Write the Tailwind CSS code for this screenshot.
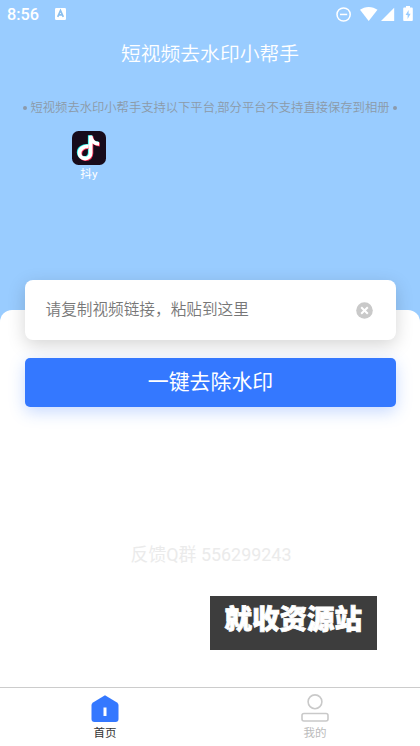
<!DOCTYPE html>
<html lang="zh-CN">
<head>
<meta charset="utf-8">
<meta name="viewport" content="width=device-width, initial-scale=1">
<title>短视频去水印小帮手</title>
<script src="https://cdn.jsdelivr.net/npm/@tailwindcss/browser@4"></script>
</head>
<body class="bg-white">
<div class="relative flex h-[746px] w-[420px] flex-col overflow-hidden bg-[#99ccff] font-['Roboto','Noto_Sans_CJK_SC',sans-serif]">
  <header class="flex h-7 shrink-0 items-center justify-between pl-[7px] pr-[6px] text-white">
    <div class="flex items-center gap-[15px]">
      <span class="w-[33px] pt-[2px] whitespace-nowrap text-[16.3px] leading-7 font-medium">8:56</span>
      <svg class="h-3 w-[11px]" viewBox="0 0 11 12"><rect width="11" height="12" rx="1.2" fill="#fff"/><path d="M2.700 8.800 5.500 2.500 8.300 8.800M3.800 6.900h3.400" fill="none" stroke="#8abfee" stroke-width="1.700"/></svg>
    </div>
    <svg class="h-7 w-[80px]" viewBox="334 0 80 28" fill="#fff"><circle cx="343.6" cy="14.5" r="6.6" fill="none" stroke="#fff" stroke-width="1.5"/><path d="M340 13.700h7.200v1.500H340z"/><path d="M368.700 21.100 360 9.800C362.400 8 365.400 6.900 368.700 6.900S375 8 377.500 9.800z"/><path d="M394.200 7.700V21H381z"/><path fill-rule="evenodd" d="M406 6h4v1.600h1.600c.7 0 1.200.5 1.200 1.200v11.100c0 .7-.5 1.200-1.200 1.200h-7.200c-.7 0-1.200-.5-1.200-1.200V8.800c0-.7.5-1.200 1.200-1.200h1.600zM408.600 10l-3 5h2v4l3-5.200h-2z"/></svg>
  </header>
  <h1 class="h-[50px] shrink-0 pt-[2px] text-center text-[19.8px] leading-[50px] font-[350] text-white">短视频去水印小帮手</h1>
  <div class="mt-[18px] flex h-[22px] shrink-0 items-center justify-center gap-[4px] text-[12.3px] leading-[22px] font-[350] whitespace-nowrap text-[#8c9aa8]">
    <span class="mt-[2px] size-[4px] rounded-full bg-[#8c9aab]"></span>
    <span class="pt-[1px]">短视频去水印小帮手支持以下平台,部分平台不支持直接保存到相册</span>
    <span class="mt-[2px] size-[4px] rounded-full bg-[#8c9aab]"></span>
  </div>
  <div class="mt-[12.500px] ml-[72px] flex w-[34px] shrink-0 flex-col items-center">
    <svg class="size-[34px]" viewBox="0 0 34 34"><rect width="34" height="34" rx="6.500" fill="#170b1b"/>
      <g fill="none" stroke-width="3.800"><path d="M16.500 15.500c-5-.4-9 2.500-9 6.500 0 3.300 2.400 5.500 5.500 5.500 3.300 0 5.600-2.300 5.600-5.600V4.700c.3 5 3.800 8 8.500 8.200" stroke="#25f4ee" transform="translate(-.8 -.5)"/><path d="M16.500 15.500c-5-.4-9 2.500-9 6.500 0 3.300 2.400 5.500 5.500 5.500 3.300 0 5.600-2.300 5.600-5.600V4.700c.3 5 3.800 8 8.500 8.200" stroke="#fe2c55" transform="translate(.8 .7)"/><path d="M16.500 15.500c-5-.4-9 2.500-9 6.500 0 3.300 2.400 5.500 5.500 5.500 3.300 0 5.600-2.300 5.600-5.600V4.700c.3 5 3.800 8 8.500 8.200" stroke="#fff"/></g>
    </svg>
    <span class="mt-[1px] text-[11.800px] leading-[17px] text-white">抖y</span>
  </div>
  <main class="mt-auto flex h-[377px] shrink-0 flex-col rounded-t-[12px] bg-white px-[24.500px]">
    <div class="-mt-[30px] flex h-[60px] shrink-0 items-center justify-between rounded-[8px] bg-white pr-[23px] pl-[21px] shadow-[0_5px_18px_rgba(0,0,0,0.17)]">
      <span class="text-[15.650px] font-[350] text-[#777]">请复制视频链接，粘贴到这里</span>
      <svg class="size-[17px]" viewBox="0 0 17 17"><circle cx="8.500" cy="8.500" r="8.300" fill="#c9c9c9"/><path d="m5.200 5.200 6.600 6.600m0-6.600-6.600 6.600" stroke="#fff" stroke-width="2"/></svg>
    </div>
    <button class="mt-[18px] h-[49px] shrink-0 rounded-[5px] bg-[#3478ff] pl-[1px] text-[20.900px] leading-[49px] text-white shadow-[0_5px_16px_rgba(52,120,255,0.27)]">一键去除水印</button>
    <p class="mt-[134px] pl-[2px] text-center text-[17.900px] leading-7 whitespace-nowrap text-[#ebebeb]">反馈Q群 556299243</p>
    <div class="mt-[27px] mr-[-5px] ml-[185px] flex h-[54px] w-[167.500px] shrink-0 justify-center bg-[#3d3d3d] pt-[5px]">
      <span class="text-[27.500px] leading-[38px] font-black whitespace-nowrap text-white [-webkit-text-stroke:0.8px_white]">就收资源站</span>
    </div>
  </main>
  <nav class="flex h-[59px] shrink-0 border-t border-[#ccc] bg-white">
    <div class="flex flex-1 flex-col items-center pt-[6px]">
      <svg class="h-[29px] w-[28px]" viewBox="0 0 28 29"><path d="M14 1.200 26 8.500Q27.500 9.500 27.500 11V25q0 3-3 3h-21q-3 0-3-3V11Q.5 9.500 2 8.500z" fill="#3478ff"/><rect x="12.500" y="13.500" width="3" height="8.500" fill="#fff"/></svg>
      <span class="mt-[1px] text-[11.500px] leading-[19px] text-[#333]">首页</span>
    </div>
    <div class="flex flex-1 flex-col items-center pt-[6px]">
      <svg class="h-[29px] w-[28px]" viewBox="0 0 28 29" fill="none" stroke="#c9c9c9" stroke-width="1.600"><circle cx="14" cy="7.800" r="6.900"/><rect x="1" y="19.500" width="26" height="7.500" rx="2"/></svg>
      <span class="mt-[1px] text-[11.500px] leading-[19px] text-[#bbb]">我的</span>
    </div>
  </nav>
</div>
</body>
</html>
